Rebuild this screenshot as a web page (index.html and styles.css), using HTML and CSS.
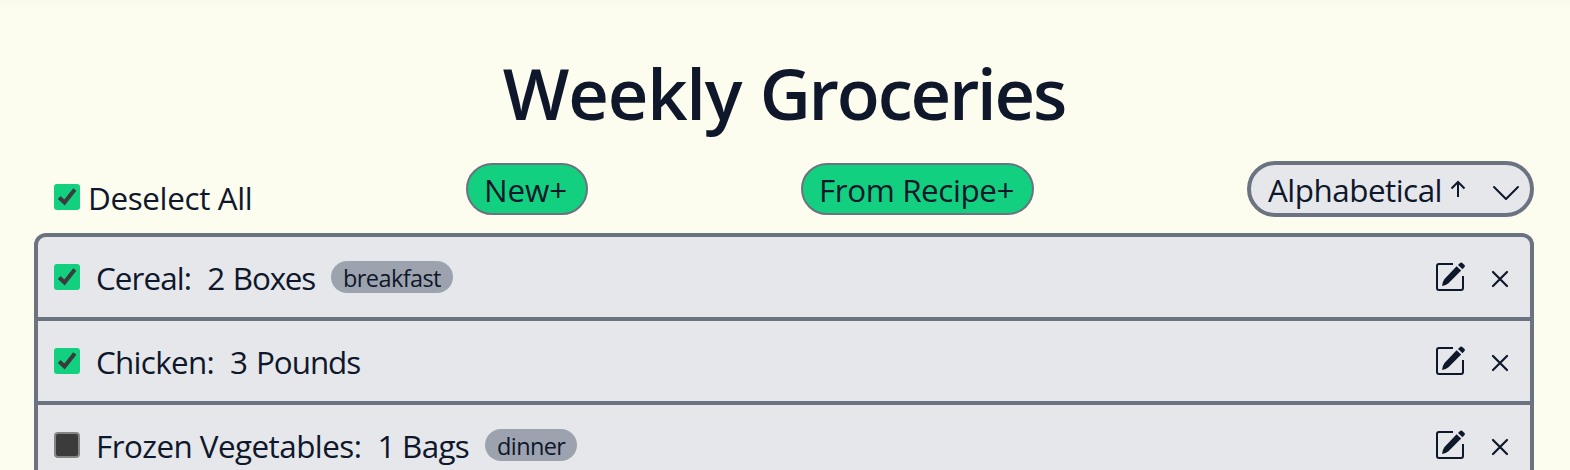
FILE: index.html
```html
<!DOCTYPE html>
<html lang="en">
<head>
<meta charset="utf-8">
<title>Weekly Groceries</title>
<link rel="stylesheet" href="styles.css">
</head>
<body>
<svg class="sprite" aria-hidden="true">
  <symbol id="tick" viewBox="0 0 26 26"><rect width="26" height="26" rx="3" fill="#12d080"/><path d="M5.200 13.500l5.300 5L20.800 5.500" fill="none" stroke="#3b3b3b" stroke-width="4"/></symbol>
  <symbol id="empty" viewBox="0 0 26 26"><rect x="1" y="1" width="24" height="24" rx="3" fill="#3b3b3b" stroke="#858585" stroke-width="2"/></symbol>
  <symbol id="edit" viewBox="0 0 30 30"><path d="M17 2H3Q1 2 1 4V26Q1 28 3 28H25Q27 28 27 26V14" fill="none" stroke="#0f172a" stroke-width="2"/><path d="M20.600 4.200L25.200 8.600L12.500 21.200Q10 23.200 6 24Q6.300 20 8.500 17ZM22 3L24.300 .8Q25.300 0 26.300 1L28.500 3Q29.500 4 28.500 5L26.500 7.200Z" fill="#0f172a"/></symbol>
  <symbol id="close" viewBox="0 0 18 18"><path d="M2 2L16 16M16 2L2 16" fill="none" stroke="#0f172a" stroke-width="2.200" stroke-linecap="round"/></symbol>
</svg>
<main class="page">
  <h1 class="title"><span class="weekly">Weekly</span> <span class="groceries">Groceries</span></h1>
  <div class="toolbar">
    <label class="select-all"><svg class="check"><use href="#tick"/></svg><span class="deselect">Deselect All</span></label>
    <button class="button new"><span>New+</span></button>
    <button class="button recipe"><span>From Recipe+</span></button>
    <div class="sort"><span class="sort-name">Alphabetical</span>
      <svg class="arrow" viewBox="0 0 16 18"><path d="M8 17V2M1.500 8.500L8 2L14.500 8.500" fill="none" stroke="#0f172a" stroke-width="2"/></svg>
      <svg class="chevron" viewBox="0 0 28 16"><path d="M2 2L14 14L26 2" fill="none" stroke="#0f172a" stroke-width="2" stroke-linecap="round" stroke-linejoin="round"/></svg>
    </div>
  </div>
  <ul class="list">
    <li class="row"><svg class="check"><use href="#tick"/></svg><span class="name cereal">Cereal:</span><span class="amount boxes">2 Boxes</span><span class="tag breakfast">breakfast</span><svg class="edit"><use href="#edit"/></svg><svg class="close"><use href="#close"/></svg></li>
    <li class="row"><svg class="check"><use href="#tick"/></svg><span class="name chicken">Chicken:</span><span class="amount pounds">3 Pounds</span><svg class="edit"><use href="#edit"/></svg><svg class="close"><use href="#close"/></svg></li>
    <li class="row"><svg class="check"><use href="#empty"/></svg><span class="name frozen">Frozen Vegetables:</span><span class="amount bags">1 Bags</span><span class="tag dinner">dinner</span><svg class="edit"><use href="#edit"/></svg><svg class="close"><use href="#close"/></svg></li>
  </ul>
</main>
</body>
</html>
```
FILE: styles.css
```css
* { box-sizing: border-box; }
body { margin: 0; height: 470px; overflow: hidden; background: linear-gradient(#f9f9ec, #fcfcef 10px); color: #0f172a; font-family: "Segoe UI", "Open Sans", "Noto Sans", sans-serif; font-size: 31.4px; line-height: 42px; }
.sprite { display: none; }
.page { width: 1500px; margin-left: 34px; padding-top: 47px; }
.title { margin: 0; height: 114px; font-size: 70.5px; line-height: 92px; font-weight: 600; text-align: center; white-space: nowrap; }
.weekly { letter-spacing: -1.2px; }
.groceries { letter-spacing: -2.2px; }
.toolbar { display: flex; justify-content: space-between; align-items: flex-start; height: 72px; }
.toolbar span, .row span { white-space: nowrap; }
.check { width: 26px; height: 26px; flex: none; }
.select-all { display: flex; width: 219px; padding: 23px 0 0 20px; }
.deselect { margin: -7px 0 0 8px; letter-spacing: -.35px; }
.button { height: 52px; margin-top: 2px; padding: 2px 0 0 16px; border: 2px solid #6b7280; border-radius: 26px; background: #12d080; color: inherit; font: inherit; text-align: left; }
.new { width: 122px; letter-spacing: -.1px; }
.recipe { width: 233px; letter-spacing: -.4px; }
.sort { display: flex; width: 287px; height: 56px; padding: 4px 0 0 17px; border: 4px solid #6b7280; border-radius: 28px; background: #e5e7eb; letter-spacing: -.5px; }
.sort-name { width: 179px; }
.arrow { width: 16px; height: 18px; margin: 11px 26px 0 3px; }
.chevron { width: 28px; height: 16px; margin-top: 16px; }
.list { margin: 0; padding: 0; list-style: none; border: 4px solid #6b7280; border-radius: 12px 12px 0 0; background: #e5e7eb; }
.row { display: flex; height: 84px; padding: 20px 16px 0; border-bottom: 4px solid #6b7280; letter-spacing: -.7px; }
.row .check { margin: 7px 16px 0 0; }
.name { margin-right: 16px; }
.cereal { letter-spacing: -.9px; }
.boxes { letter-spacing: -1.2px; word-spacing: 2px; }
.pounds { letter-spacing: -1.05px; word-spacing: 2px; }
.frozen { letter-spacing: -.55px; }
.row .tag { height: 32px; margin: 4px 0 0 16px; padding-left: 12px; border-radius: 16px; background: #9ca3af; font-size: 23.5px; line-height: 35px; letter-spacing: -.6px; }
.breakfast { width: 122px; }
.dinner { width: 92px; }
.edit { width: 30px; height: 30px; margin: 5px 25px 0 auto; flex: none; }
.close { width: 18px; height: 18px; margin: 13px 5px 0 0; flex: none; }
```
